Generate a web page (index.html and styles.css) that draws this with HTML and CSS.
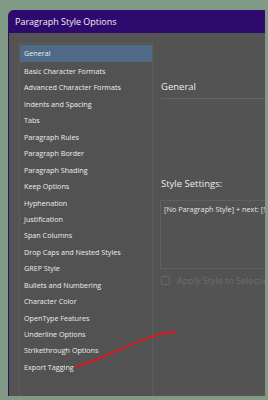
FILE: index.html
```html
<!DOCTYPE html>
<html>
<head>
<meta charset="utf-8">
<link rel="stylesheet" href="styles.css">
</head>
<body>
<div class="window">
  <div class="titlebar">Paragraph Style Options</div>
  <div class="content">
    <ul class="list">
      <li class="item selected">General</li>
      <li class="item">Basic Character Formats</li>
      <li class="item">Advanced Character Formats</li>
      <li class="item">Indents and Spacing</li>
      <li class="item">Tabs</li>
      <li class="item">Paragraph Rules</li>
      <li class="item">Paragraph Border</li>
      <li class="item">Paragraph Shading</li>
      <li class="item">Keep Options</li>
      <li class="item">Hyphenation</li>
      <li class="item">Justification</li>
      <li class="item">Span Columns</li>
      <li class="item">Drop Caps and Nested Styles</li>
      <li class="item">GREP Style</li>
      <li class="item">Bullets and Numbering</li>
      <li class="item">Character Color</li>
      <li class="item">OpenType Features</li>
      <li class="item">Underline Options</li>
      <li class="item">Strikethrough Options</li>
      <li class="item">Export Tagging</li>
    </ul>
    <div class="pane">
      <div class="heading">General</div>
      <div class="rule"></div>
      <div class="subheading">Style Settings:</div>
      <div class="settings">[No Paragraph Style] + next: [Same Style]</div>
      <label class="check"><span class="box"></span>Apply Style to Selection</label>
    </div>
  </div>
  <svg class="annot" width="268" height="400" viewBox="0 0 268 400">
    <path d="M76 367 C 98 360, 118 350, 138 342 S 164 333, 175 332" fill="none" stroke="#e3131b" stroke-width="1.8" stroke-linecap="round"/>
  </svg>
</div>
</body>
</html>
```
FILE: styles.css
```css
html, body {
  margin: 0;
  padding: 0;
}
body {
  width: 268px;
  height: 400px;
  background: #809a86;
  overflow: hidden;
  font-family: "Open Sans", "Noto Sans", sans-serif;
}
.window {
  margin: 10px 0 0 8px;
  width: 257px;
  height: 386px;
  background: #535353;
  border-top-left-radius: 6px;
  overflow: hidden;
  display: flex;
  flex-direction: column;
  border-left: 1px solid #2f0b6c;
  box-sizing: border-box;
}
.titlebar {
  height: 23px;
  background: #2e0a6e;
  color: #f2f0f6;
  font-size: 9px;
  line-height: 23px;
  padding-left: 6px;
  flex: none;
}
.content {
  flex: 1;
  display: flex;
  padding: 10px 0 0 10px;
  min-height: 0;
}
.list {
  list-style: none;
  margin: 0;
  padding: 1px 0 0 0;
  width: 134px;
  box-sizing: border-box;
  border: 1px solid #5d5d5d;
  border-bottom: none;
  background: #525252;
  flex: none;
}
.item {
  height: 16.45px;
  line-height: 16.45px;
  font-size: 7.2px;
  color: #ececec;
  padding-left: 4px;
  white-space: nowrap;
}
.item.selected {
  background: #4e6a87;
  height: 17px;
  line-height: 17px;
  margin-bottom: 1px;
}
.pane {
  flex: 1;
  padding: 37px 0 0 8px;
  min-width: 0;
  overflow: hidden;
}
.heading {
  font-size: 9.5px;
  color: #ececec;
  line-height: 14px;
}
.rule {
  height: 1px;
  background: #656565;
  margin-top: 4px;
}
.subheading {
  margin-top: 78px;
  font-size: 9.5px;
  color: #ececec;
  line-height: 14px;
}
.settings {
  margin-top: 9px;
  margin-left: -1px;
  height: 69px;
  border: 1px solid #606060;
  border-right: none;
  box-sizing: border-box;
  font-size: 7.3px;
  color: #e6e6e6;
  padding: 3px 0 0 3px;
  white-space: nowrap;
  overflow: hidden;
}
.check {
  display: flex;
  align-items: center;
  margin-top: 5px;
  font-size: 9px;
  color: #6e6e6e;
  white-space: nowrap;
}
.box {
  width: 7px;
  height: 7px;
  border: 1px solid #6a6a6a;
  border-radius: 1px;
  margin-right: 7px;
  flex: none;
}
.annot {
  position: absolute;
  left: 0;
  top: 0;
  pointer-events: none;
}
```
